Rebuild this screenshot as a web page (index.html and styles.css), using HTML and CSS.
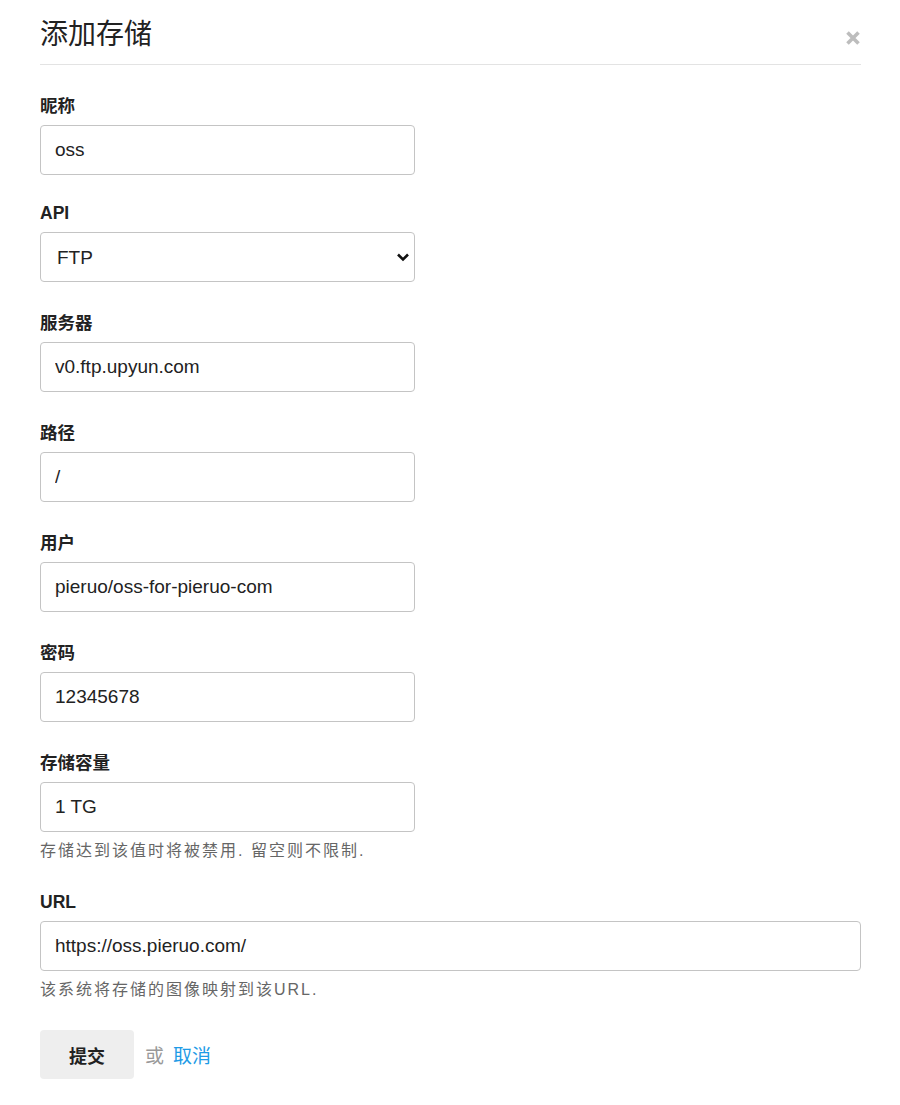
FILE: index.html
```html
<!DOCTYPE html>
<html lang="zh-CN">
<head>
    <meta charset="UTF-8">
    <meta name="viewport" content="width=device-width, initial-scale=1.0">
    <title>添加存储</title>
    <link rel="stylesheet" href="styles.css">
</head>
<body>
<div class="modal">
    <div class="modal-header">
        <h2 class="modal-title">添加存储</h2>
        <button type="button" class="close" aria-label="关闭">
            <svg width="16" height="16" viewBox="0 0 16 16">
                <path d="M2.5 2.5 L13.5 13.5 M13.5 2.5 L2.5 13.5" stroke="#bdbdbd" stroke-width="3.6" stroke-linecap="butt"/>
            </svg>
        </button>
    </div>

    <form class="storage-form">
        <div class="field">
            <label for="name">昵称</label>
            <input type="text" id="name" class="input" value="oss">
        </div>

        <div class="field">
            <label for="api">API</label>
            <div class="select-wrap">
                <select id="api" class="input">
                    <option>FTP</option>
                    <option>S3</option>
                    <option>Local</option>
                </select>
                <svg class="select-arrow" width="14" height="10" viewBox="0 0 14 10">
                    <path d="M2 2.5 L7 7.5 L12 2.5" fill="none" stroke="#111" stroke-width="2.6"/>
                </svg>
            </div>
        </div>

        <div class="field">
            <label for="server">服务器</label>
            <input type="text" id="server" class="input" value="v0.ftp.upyun.com">
        </div>

        <div class="field">
            <label for="path">路径</label>
            <input type="text" id="path" class="input" value="/">
        </div>

        <div class="field">
            <label for="user">用户</label>
            <input type="text" id="user" class="input" value="pieruo/oss-for-pieruo-com">
        </div>

        <div class="field">
            <label for="pass">密码</label>
            <input type="text" id="pass" class="input" value="12345678">
        </div>

        <div class="field">
            <label for="capacity">存储容量</label>
            <input type="text" id="capacity" class="input" value="1 TG">
            <p class="help">存储达到该值时将被禁用. 留空则不限制.</p>
        </div>

        <div class="field">
            <label for="url">URL</label>
            <input type="text" id="url" class="input input-wide" value="https://oss.pieruo.com/">
            <p class="help">该系统将存储的图像映射到该URL.</p>
        </div>

        <div class="actions">
            <button type="submit" class="btn">提交</button>
            <span class="or">或</span>
            <a href="#" class="cancel">取消</a>
        </div>
    </form>
</div>
</body>
</html>
```

FILE: styles.css
```css
* { box-sizing: border-box; }
body {
    margin: 0; background: #fff; color: #222;
    font-family: "Liberation Sans", "Noto Sans CJK SC", sans-serif;
}
.modal { width: 821px; margin-left: 40px; }

.modal-header {
    display: flex; justify-content: space-between; align-items: center;
    padding: 16px 0 10px; border-bottom: 1px solid #e3e3e3;
}
.modal-title { margin: 0; font-size: 28px; line-height: 38px; font-weight: normal; color: #222; }
.close {
    border: 0; background: none; padding: 0; margin-top: 6px;
    width: 16px; height: 16px; cursor: pointer; display: flex;
}

.storage-form { padding-top: 30px; }
.field { margin-bottom: 30px; }
.field:first-child { margin-bottom: 27px; }
.field label {
    display: block; font-size: 17.5px; line-height: 22px; font-weight: bold;
    color: #222; margin-bottom: 8px;
}
.input {
    display: block; width: 375px; height: 50px; padding: 0 14px;
    border: 1px solid #c4c4c4; border-radius: 4px; background: #fff;
    font-family: inherit; font-size: 19px; color: #222; outline: none;
}
.input-wide { width: 821px; }

.select-wrap { position: relative; width: 375px; }
.select-wrap select { appearance: none; -webkit-appearance: none; padding-left: 16px; }
.select-arrow { position: absolute; right: 5px; top: 20px; pointer-events: none; }

.help {
    margin: 9px 0 0; font-size: 16px; line-height: 20px; color: #666;
    letter-spacing: 2px;
}

.actions { display: flex; align-items: center; }
.btn {
    width: 94px; height: 49px; border: 0; border-radius: 4px; background: #eeeeee;
    font-family: inherit; font-size: 18px; font-weight: bold; color: #222; cursor: pointer;
}
.or { margin-left: 11px; font-size: 19px; color: #999; }
.cancel { margin-left: 9px; font-size: 19px; color: #1e9be6; text-decoration: none; }
```
